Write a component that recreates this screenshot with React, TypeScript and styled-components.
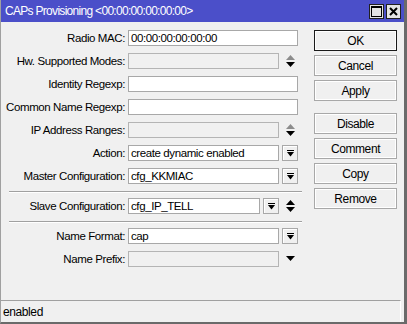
import React from 'react';
import styled, { createGlobalStyle } from 'styled-components';

const GlobalStyle = createGlobalStyle`
  body {
    margin: 0;
    font-family: "Liberation Sans", Arial, sans-serif;
    font-size: 11.5px;
    letter-spacing: -0.4px;
  }
`;

const Window = styled.div`
  width: 407px;
  height: 324px;
  box-sizing: border-box;
  background: #f0f0f0;
  border-left: 1px solid #a0a0a0;
  border-right: 3px solid #6a6a6a;
  border-bottom: 2px solid #6a6a6a;
  display: flex;
  flex-direction: column;
`;

const TitleBar = styled.div`
  height: 22px;
  flex: none;
  background: #4b4fc9;
  color: #fff;
  display: flex;
  align-items: center;
  justify-content: space-between;
  padding: 0 3px 0 4px;
  font-size: 12px;
  letter-spacing: -0.7px;
`;

const TitleButtons = styled.div`
  display: flex;
  gap: 2px;
`;

const TitleButton = styled.div`
  width: 15px;
  height: 15px;
  box-sizing: border-box;
  background: #e4e4e4;
  border: 1px solid #202020;
  display: flex;
  align-items: center;
  justify-content: center;
`;

const Content = styled.div`
  flex: 1;
  display: flex;
  padding-top: 8px;
  gap: 16px;
`;

const Form = styled.div`
  width: 297px;
  display: flex;
  flex-direction: column;
  gap: 7px;
`;

const Row = styled.div`
  display: grid;
  grid-template-columns: 124px 170px;
  column-gap: 3px;
  align-items: center;
  height: 16px;
`;

const Label = styled.div`
  text-align: right;
  color: #000;
  white-space: nowrap;
`;

const Field = styled.div`
  display: flex;
  align-items: center;
  height: 16px;
`;

const Input = styled.div<{ $disabled?: boolean }>`
  flex: 1;
  height: 16px;
  box-sizing: border-box;
  border: 1px solid ${p => (p.$disabled ? '#b4b4b4' : '#a8a8a8')};
  background: ${p => (p.$disabled ? '#f0f0f0' : '#fff')};
  padding-left: 2px;
  line-height: 14px;
  color: #000;
  white-space: nowrap;
  overflow: hidden;
`;

const Slot = styled.div`
  width: 16px;
  height: 16px;
  margin-left: 3px;
  flex: none;
  display: flex;
  align-items: center;
  justify-content: center;
`;

const DropButton = styled(Slot)`
  box-sizing: border-box;
  border: 1px solid #a8a8a8;
  background: #f0f0f0;
  box-shadow: inset 1px 1px 0 #fff;
`;

const Separator = styled.div`
  height: 1px;
  margin: 0 -4px -2px 8px;
  background: #a0a0a0;
  border-bottom: 1px solid #fff;
`;

const Buttons = styled.div`
  display: flex;
  flex-direction: column;
  gap: 4px;
  width: 83px;
`;

const Button = styled.div<{ $focused?: boolean; $spaced?: boolean }>`
  height: 21px;
  box-sizing: border-box;
  border: 1px solid ${p => (p.$focused ? '#1a1a1a' : '#a8a8a8')};
  background: #f0f0f0;
  box-shadow: inset 1px 1px 0 #fff, inset -1px -1px 0 #fff;
  display: flex;
  align-items: center;
  justify-content: center;
  color: #000;
  font-size: 12px;
  margin-top: ${p => (p.$spaced ? '8px' : '0')};
`;

const StatusBar = styled.div`
  height: 22px;
  flex: none;
  box-sizing: border-box;
  margin-right: 3px;
  border-top: 1px solid #a0a0a0;
  border-right: 1px solid #fff;
  padding-left: 2px;
  display: flex;
  align-items: center;
  color: #000;
  font-size: 12px;
`;

const UpDown = ({ upColor = '#000' }: { upColor?: string }) => (
  <svg width="9" height="12" viewBox="0 0 9 12">
    <polygon points="4.5,0 9,5 0,5" fill={upColor} />
    <polygon points="0,7 9,7 4.5,12" fill="#000" />
  </svg>
);

const DownOnly = () => (
  <svg width="9" height="6" viewBox="0 0 9 6">
    <polygon points="0,0 9,0 4.5,5" fill="#000" />
  </svg>
);

const DropIcon = () => (
  <svg width="7" height="7" viewBox="0 0 7 7">
    <rect x="0" y="0" width="7" height="1" fill="#000" />
    <polygon points="0,2 7,2 3.5,6.5" fill="#000" />
  </svg>
);

const App: React.FC = () => {
  return (
    <>
      <GlobalStyle />
      <Window>
        <TitleBar>
          <span>CAPs Provisioning &lt;00:00:00:00:00:00&gt;</span>
          <TitleButtons>
            <TitleButton>
              <svg width="11" height="11" viewBox="0 0 11 11">
                <rect x="0.5" y="0.5" width="10" height="10" fill="none" stroke="#000" />
                <rect x="0" y="0" width="11" height="2" fill="#000" />
              </svg>
            </TitleButton>
            <TitleButton>
              <svg width="9" height="9" viewBox="0 0 9 9">
                <path d="M1 1 L8 8 M8 1 L1 8" stroke="#000" strokeWidth="2" />
              </svg>
            </TitleButton>
          </TitleButtons>
        </TitleBar>
        <Content>
          <Form>
            <Row>
              <Label>Radio MAC:</Label>
              <Field><Input>00:00:00:00:00:00</Input></Field>
            </Row>
            <Row>
              <Label>Hw. Supported Modes:</Label>
              <Field>
                <Input $disabled />
                <Slot><UpDown upColor="#8c8c8c" /></Slot>
              </Field>
            </Row>
            <Row>
              <Label>Identity Regexp:</Label>
              <Field><Input /></Field>
            </Row>
            <Row>
              <Label>Common Name Regexp:</Label>
              <Field><Input /></Field>
            </Row>
            <Row>
              <Label>IP Address Ranges:</Label>
              <Field>
                <Input $disabled />
                <Slot><UpDown upColor="#8c8c8c" /></Slot>
              </Field>
            </Row>
            <Row>
              <Label>Action:</Label>
              <Field>
                <Input>create dynamic enabled</Input>
                <DropButton><DropIcon /></DropButton>
              </Field>
            </Row>
            <Row>
              <Label>Master Configuration:</Label>
              <Field>
                <Input>cfg_KKMIAC</Input>
                <DropButton><DropIcon /></DropButton>
              </Field>
            </Row>
            <Separator />
            <Row>
              <Label>Slave Configuration:</Label>
              <Field>
                <Input>cfg_IP_TELL</Input>
                <DropButton><DropIcon /></DropButton>
                <Slot><UpDown /></Slot>
              </Field>
            </Row>
            <Separator />
            <Row>
              <Label>Name Format:</Label>
              <Field>
                <Input>cap</Input>
                <DropButton><DropIcon /></DropButton>
              </Field>
            </Row>
            <Row>
              <Label>Name Prefix:</Label>
              <Field>
                <Input $disabled />
                <Slot><DownOnly /></Slot>
              </Field>
            </Row>
          </Form>
          <Buttons>
            <Button $focused>OK</Button>
            <Button>Cancel</Button>
            <Button>Apply</Button>
            <Button $spaced>Disable</Button>
            <Button>Comment</Button>
            <Button>Copy</Button>
            <Button>Remove</Button>
          </Buttons>
        </Content>
        <StatusBar>enabled</StatusBar>
      </Window>
    </>
  );
};

export default App;
